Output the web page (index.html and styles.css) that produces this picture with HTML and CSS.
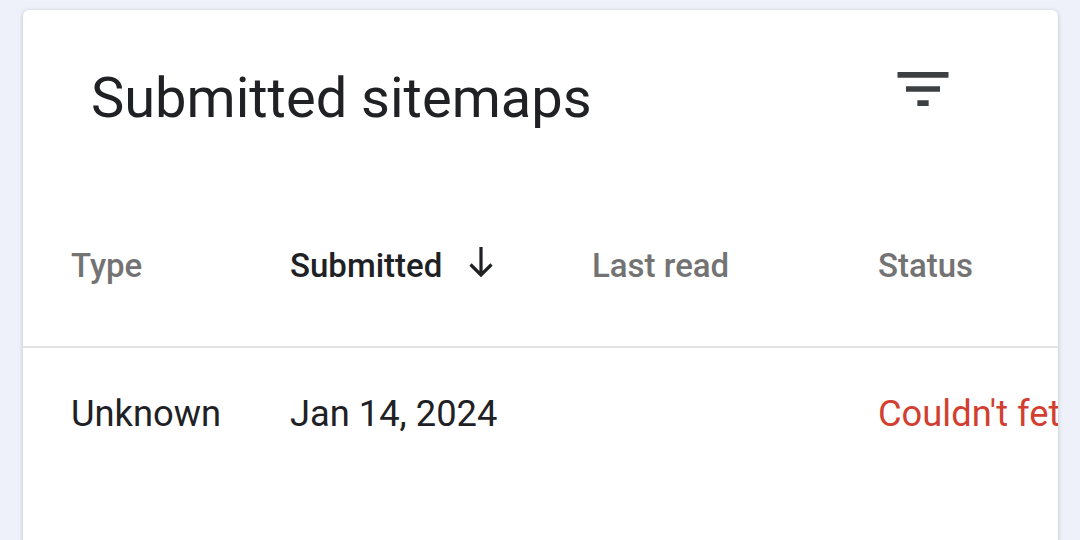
FILE: index.html
```html
<!DOCTYPE html>
<html lang="en">
<head>
    <meta charset="UTF-8">
    <meta name="viewport" content="width=device-width, initial-scale=1.0">
    <link rel="stylesheet" href="styles.css">
</head>
<body>
    <div class="card">
        <div class="card-head">
            <h1 class="title">Submitted sitemaps</h1>
            <button class="icon-btn" type="button" aria-label="Filter">
                <svg width="68" height="68" viewBox="0 0 24 24">
                    <path d="M10 18h4v-2h-4v2zM3 6v2h18V6H3zm3 7h12v-2H6v2z" fill="#3c4043"/>
                </svg>
            </button>
        </div>

        <div class="table">
            <div class="row head">
                <div class="cell">Type</div>
                <div class="cell sorted">Submitted<svg class="sort-arrow" width="24" height="31" viewBox="0 0 24 31">
                        <path d="M12 1v28M1.5 18.5L12 29l10.5-10.5" fill="none" stroke="#202124" stroke-width="3.2"/>
                    </svg></div>
                <div class="cell">Last read</div>
                <div class="cell">Status</div>
            </div>
            <div class="row">
                <div class="cell">Unknown</div>
                <div class="cell">Jan 14, 2024</div>
                <div class="cell"></div>
                <div class="cell error">Couldn't fetch</div>
            </div>
        </div>
    </div>
</body>
</html>
```

FILE: styles.css
```css
body {
    margin: 0;
    padding: 10px 22px 0 23px;
    height: 540px;
    box-sizing: border-box;
    overflow: hidden;
    background-color: #eef1fa;
    font-family: 'Roboto', 'Liberation Sans', sans-serif;
    color: #202124;
}

.card {
    background-color: #ffffff;
    border-radius: 6px;
    box-shadow: 0 1px 4px rgba(60, 64, 67, 0.28);
    height: 620px;
    overflow: hidden;
}

.card-head {
    display: flex;
    justify-content: space-between;
    align-items: flex-start;
    padding: 45px 101px 0 68px;
}

.title {
    margin: 15px 0 0;
    font-size: 56px;
    line-height: 57px;
    font-weight: 400;
}

.icon-btn {
    border: none;
    background: none;
    padding: 0;
    display: block;
    cursor: pointer;
}

.icon-btn svg {
    display: block;
}

.table {
    margin-top: 122px;
}

.row {
    display: grid;
    grid-template-columns: 219px 302px 286px 1fr;
    padding-left: 48px;
    white-space: nowrap;
}

.row.head {
    font-size: 33px;
    line-height: 33px;
    font-weight: 500;
    color: #737373;
    padding-bottom: 64px;
    border-bottom: 2px solid #e2e2e2;
}

.row.head .sorted {
    color: #202124;
}

.sort-arrow {
    vertical-align: baseline;
    margin-left: 27px;
    margin-top: -10px;
}

.row:not(.head) {
    font-size: 36.3px;
    line-height: 36px;
    padding-top: 48px;
}

.cell.error {
    color: #d23f31;
}
```
